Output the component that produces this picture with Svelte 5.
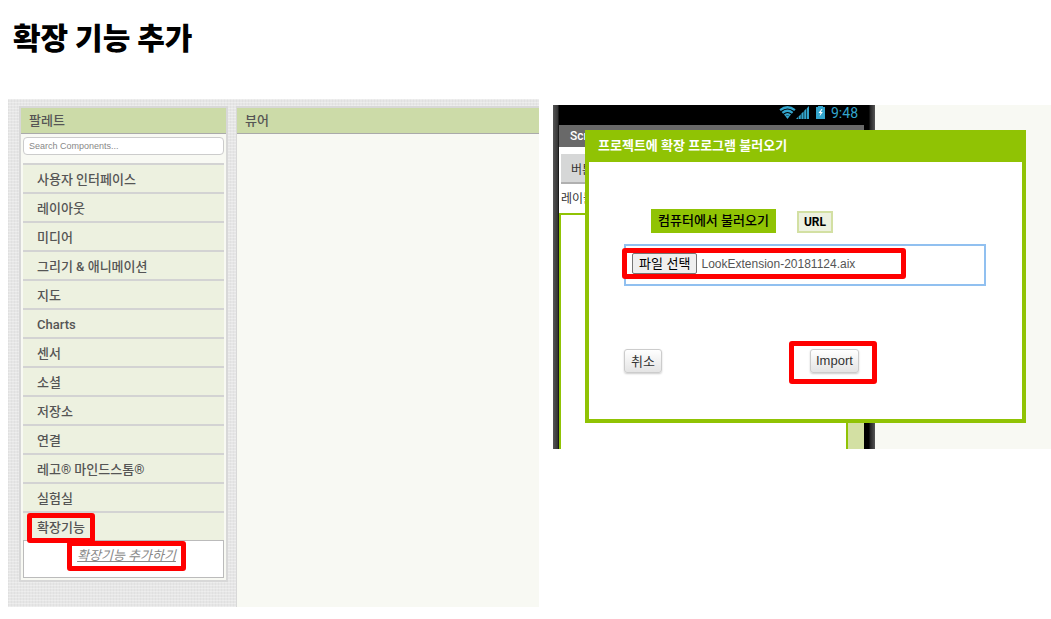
<script>
  const categories = [
    '사용자 인터페이스',
    '레이아웃',
    '미디어',
    '그리기 & 애니메이션',
    '지도',
    'Charts',
    '센서',
    '소셜',
    '저장소',
    '연결',
    '레고® 마인드스톰®',
    '실험실',
    '확장기능',
  ];

  let open_category = $state('확장기능');
  let search = $state('');
  let source = $state('computer');
  let file_name = $state('LookExtension-20181124.aix');

  function pick_file(event) {
    file_name = event.currentTarget.files[0]?.name ?? file_name;
  }
</script>

<main>
  <h1>확장 기능 추가</h1>

  <div class="shots">
    <section class="workspace">
      <div class="panel palette">
        <h2>팔레트</h2>
        <div class="palette-body">
          <input type="text" aria-label="Search Components" placeholder="Search Components..." bind:value={search} />
          <ul>
            {#each categories as name}
              <li>
                <button class="category" onclick={() => (open_category = name)}>
                  <span class:marked={name === '확장기능'}>{name}</span>
                </button>
              </li>
            {/each}
          </ul>
          {#if open_category === '확장기능'}
            <div class="drawer">
              <a class="marked" href="#import">확장기능 추가하기</a>
            </div>
          {/if}
        </div>
      </div>
      <div class="panel viewer">
        <h2>뷰어</h2>
      </div>
    </section>

    <section class="preview">
      <div class="phone">
        <div class="screen">
          <div class="status">
            <svg class="wifi" viewBox="0 0 18 14" aria-hidden="true">
              <path d="M1 4.5Q9 -1.8 17 4.5M3.5 7.4Q9 2.8 14.5 7.4M6 10Q9 7.4 12 10" />
              <path class="solid" d="M6.8 11Q9 9.4 11.2 11L9 14z" />
            </svg>
            <svg class="signal" viewBox="0 0 13 13" aria-hidden="true">
              <path d="M0 13L2 11V13zM2.6 10.4L4.8 8.2V13H2.6zM5.4 7.6L7.6 5.4V13H5.4zM8.2 4.8L10.2 2.8V13H8.2zM10.8 2.2L13 0V13H10.8z" />
            </svg>
            <svg class="battery" viewBox="0 0 9 13" aria-hidden="true">
              <path d="M0 1H2V0H7V1H9V13H0z" />
              <path class="bolt" d="M5.5 3L2.5 7H4.5L3.5 10.5L6.8 6H4.8L6.5 3z" />
            </svg>
            <span>9:48</span>
          </div>
          <div class="title-bar">Screen1</div>
          <div class="widgets">
            <button class="widget-button">버튼1</button>
            <p>레이블1</p>
          </div>
          <div class="canvas"></div>
        </div>
      </div>

      <div class="dialog" id="import" role="dialog" aria-labelledby="dialog-title">
        <h2 id="dialog-title">프로젝트에 확장 프로그램 불러오기</h2>
        <div class="dialog-body">
          <div class="tabs">
            <button class="tab" class:active={source === 'computer'} onclick={() => (source = 'computer')}>
              컴퓨터에서 불러오기
            </button>
            <button class="tab" class:active={source === 'url'} onclick={() => (source = 'url')}>URL</button>
          </div>
          <div class="file-box">
            <div class="file-row marked">
              <label for="extension-file">파일 선택</label>
              <input id="extension-file" type="file" accept=".aix" onchange={pick_file} />
              <output for="extension-file">{file_name}</output>
            </div>
          </div>
          <div class="actions">
            <button>취소</button>
            <span class="marked"><button>Import</button></span>
          </div>
        </div>
      </div>
    </section>
  </div>
</main>

<style>
  :global(body) {
    margin: 0;
    background: #fff;
  }

  main {
    --green: #90c304;
    --pale: #f8f9f3;
    --text: #555;
    font-family: Roboto, 'Noto Sans CJK KR', sans-serif;
    font-size: 13px;
    color: var(--text);
    padding: 12px 0 12px 8px;
  }

  button,
  input {
    font-family: inherit;
    margin: 0;
  }

  h1 {
    margin: 0 0 39px 5px;
    font-family: 'Noto Sans CJK KR', sans-serif;
    font-size: 30px;
    font-weight: 900;
    line-height: 48px;
    color: #000;
  }

  h2 {
    margin: 0;
    font-size: 13px;
    font-weight: 500;
  }

  .shots {
    display: grid;
    grid-template-columns: 531fr 498fr;
    gap: 14px;
    align-items: start;
  }

  /* red frames around the things to click */
  .marked {
    position: relative;
  }

  .marked::after {
    content: '';
    position: absolute;
    inset: -5px -10px;
    border: 5px solid #f00;
    border-radius: 3px;
    pointer-events: none;
    z-index: 1;
  }

  .workspace {
    display: flex;
    gap: 8px;
    padding: 7px 0 0 11px;
    background:
      repeating-linear-gradient(0deg, rgba(255, 255, 255, 0.3) 0 1px, transparent 1px 3px),
      repeating-linear-gradient(90deg, rgba(200, 200, 200, 0.2) 0 1px, transparent 1px 3px),
      #e6e6e6;
  }

  .panel {
    box-sizing: border-box;
    border: 2px solid #d8d8d8;
    background: var(--pale);
  }

  .panel h2 {
    padding-left: 8px;
    line-height: 25px;
    background: #ccdba8;
    border-bottom: 1px solid #aaa;
  }

  .palette {
    flex: 0 0 209px;
    margin-bottom: 25px;
  }

  .palette-body {
    padding: 3px 2px 2px;
  }

  .palette-body input {
    box-sizing: border-box;
    display: block;
    width: 100%;
    height: 18px;
    padding: 0 5px;
    border: 1px solid #ccc;
    border-radius: 4px;
    background: #fff;
    font-family: 'Liberation Sans', sans-serif;
    font-size: 9px;
    color: var(--text);
  }

  .palette-body input::placeholder {
    color: #888;
  }

  ul {
    margin: 8px 0 0;
    padding: 0;
    list-style: none;
  }

  .category {
    display: block;
    width: 100%;
    height: 29px;
    padding: 2px 0 0 14px;
    border: 0;
    border-top: 2px solid #d3d3d3;
    background: #edf1e0;
    font-size: 13px;
    font-weight: 500;
    line-height: 20px;
    text-align: left;
    color: var(--text);
  }

  .category span {
    display: inline-block;
  }

  .drawer {
    height: 36px;
    padding-left: 6px;
    border: 1px solid #bbb;
    background: #fff;
    line-height: 30px;
    text-align: center;
  }

  .drawer a {
    display: inline-block;
    line-height: 20px;
    font-style: italic;
    color: #888;
  }

  .viewer {
    flex: 1;
    border-width: 2px 0 0 1px;
  }

  .preview {
    display: grid;
    margin-top: 6px;
    background: var(--pale);
  }

  .phone,
  .dialog {
    grid-area: 1 / 1;
  }

  .phone {
    box-sizing: border-box;
    display: flex;
    width: 322px;
    padding: 0 6px;
    background: linear-gradient(90deg, #555, #333 5px, #000 6px, #000 316px, #222 317px, #555);
  }

  .screen {
    flex: 1;
    display: flex;
    flex-direction: column;
    border-right: 5px solid #000;
    background: #fff;
  }

  .status {
    display: flex;
    align-items: center;
    justify-content: flex-end;
    height: 20px;
    padding: 0 6px 5px 0;
    box-sizing: border-box;
    background: #000;
    color: #33a5cc;
    font-size: 14px;
  }

  .status svg {
    fill: #33a5cc;
    height: 13px;
  }

  .status .wifi {
    width: 17px;
    fill: none;
    stroke: #33a5cc;
    stroke-width: 2.4;
  }

  .wifi .solid {
    fill: #33a5cc;
    stroke: none;
  }

  .signal {
    width: 13px;
  }

  .battery {
    width: 9px;
    margin: 0 6px 0 7px;
  }

  .battery .bolt {
    fill: #fff;
  }

  .title-bar {
    padding-left: 11px;
    background: #696969;
    color: #fff;
    font-size: 12px;
    font-weight: 500;
    line-height: 22px;
  }

  .widgets {
    padding: 7px 2px 0;
    font-size: 12px;
    color: #333;
  }

  .widgets p {
    margin: 5px 0 4px;
    line-height: 20px;
  }

  .widget-button {
    height: 30px;
    padding: 0 10px;
    border: 0;
    border-bottom: 2px solid #b0b0b0;
    background: #d6d7d7;
    font-size: 12px;
    color: #333;
  }

  .canvas {
    flex: 1;
    border-top: 2px solid var(--green);
    border-left: 2px solid var(--green);
    background:
      linear-gradient(#d3e0a3, #d3e0a3) right / 16px 100% no-repeat,
      linear-gradient(var(--green), var(--green)) right / 18px 100% no-repeat;
  }

  .dialog {
    margin: 25px 25px 26px 32px;
    border: 4px solid var(--green);
    background: #fff;
    z-index: 1;
  }

  .dialog h2 {
    padding: 0 9px 4px;
    background: var(--green);
    color: #fff;
    font-weight: 700;
    line-height: 24px;
  }

  .dialog-body {
    padding: 47px 36px 46px 35px;
  }

  .tabs {
    display: flex;
    align-items: flex-end;
    gap: 21px;
    padding-left: 27px;
  }

  .tab {
    height: 22px;
    padding: 0 5px;
    border: 2px solid #d3e0a3;
    background: #edf1e0;
    font-size: 12px;
    font-weight: 700;
    color: #000;
  }

  .tab.active {
    height: 24px;
    border-color: var(--green);
    background: var(--green);
    font-size: 13px;
    font-weight: 500;
    line-height: 18px;
  }

  .file-box {
    display: flex;
    margin-top: 11px;
    padding: 7px 6px 10px;
    border: 2px solid #91c0f0;
  }

  .file-row {
    display: flex;
    align-items: center;
    gap: 4px;
    height: 21px;
    font-family: 'Liberation Sans', 'Noto Sans CJK KR', sans-serif;
    font-size: 12px;
  }

  .file-row::after {
    right: -51px;
  }

  .file-row label {
    box-sizing: border-box;
    height: 21px;
    padding: 0 6px;
    border: 1px solid #767676;
    border-radius: 2px;
    background: #efefef;
    font-size: 13px;
    line-height: 19px;
    color: #000;
  }

  .file-row input {
    display: none;
  }

  .actions {
    display: flex;
    gap: 148px;
    margin-top: 63px;
  }

  .actions .marked::after {
    inset: -8px -18px -11px -21px;
  }

  .actions button {
    display: block;
    min-width: 38px;
    height: 24px;
    padding: 0 5px 2px;
    border: 1px solid #ccc;
    border-radius: 3px;
    background: linear-gradient(#fff, #e4e4e4);
    box-shadow: 0 1px 2px rgba(0, 0, 0, 0.2);
    font-family: 'Liberation Sans', 'Noto Sans CJK KR', sans-serif;
    font-size: 13px;
    color: #333;
  }
</style>
